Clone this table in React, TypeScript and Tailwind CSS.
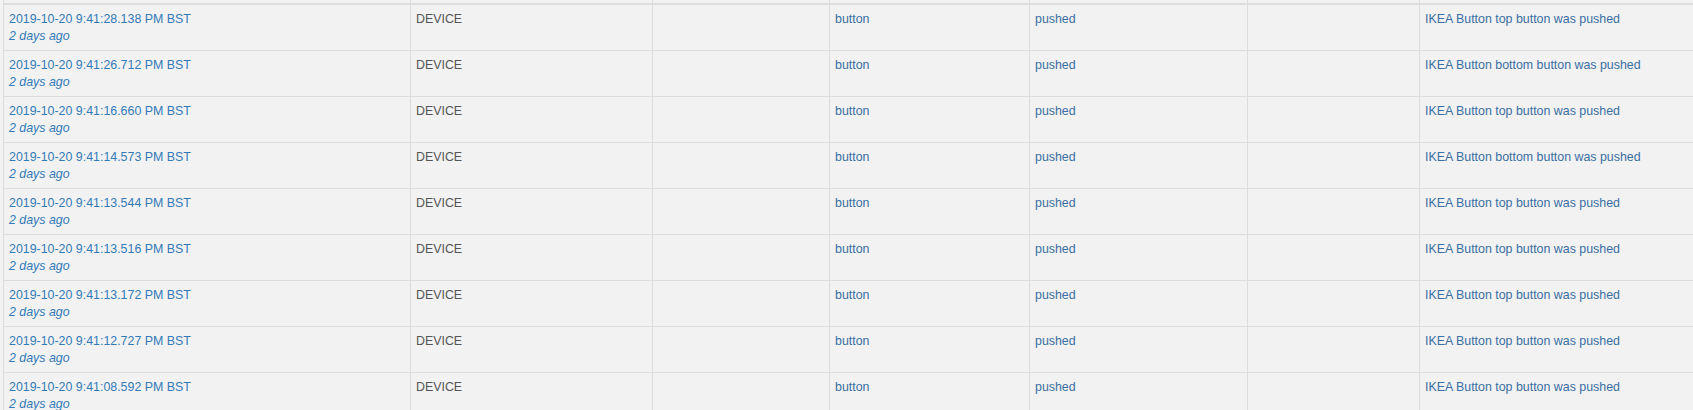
import React from "react";

const rows = [
  { time: "9:41:28.138", which: "top" },
  { time: "9:41:26.712", which: "bottom" },
  { time: "9:41:16.660", which: "top" },
  { time: "9:41:14.573", which: "bottom" },
  { time: "9:41:13.544", which: "top" },
  { time: "9:41:13.516", which: "top" },
  { time: "9:41:13.172", which: "top" },
  { time: "9:41:12.727", which: "top" },
  { time: "9:41:08.592", which: "top" },
];

const cols = "grid grid-cols-[407px_242px_177px_200px_218px_172px_1fr]";
const cell = "border-l border-[#dddddd] px-[5px] pt-[5.5px]";

export default function App() {
  return (
    <div
      className="min-h-screen w-full overflow-hidden bg-[#f2f2f2] pl-[3px] text-[12.4px] leading-[17px]"
      style={{ fontFamily: '"Liberation Sans", Arial, sans-serif' }}
    >
      {/* tail of the header row, scrolled out of view */}
      <div className={`${cols} h-[3px]`}>
        {Array.from({ length: 7 }).map((_, i) => (
          <div key={i} className="border-l border-[#dddddd]" />
        ))}
      </div>

      <div className="border-t-2 border-[#dddddd]">
        {rows.map((r, i) => (
          <div
            key={r.time}
            className={`${cols} ${i > 0 ? "h-[46px] border-t border-[#dddddd]" : "h-[45px]"}`}
          >
            <div className={cell}>
              <div className="text-[#337ab7]">2019-10-20 {r.time} PM BST</div>
              <div className="italic text-[#337ab7]">2 days ago</div>
            </div>
            <div className={`${cell} text-[#555555]`}>DEVICE</div>
            <div className={cell} />
            <div className={`${cell} text-[#3a6fa3]`}>button</div>
            <div className={`${cell} text-[#3a6fa3]`}>pushed</div>
            <div className={cell} />
            <div className={`${cell} text-[#3a6fa3]`}>
              IKEA Button {r.which} button was pushed
            </div>
          </div>
        ))}
      </div>
    </div>
  );
}
